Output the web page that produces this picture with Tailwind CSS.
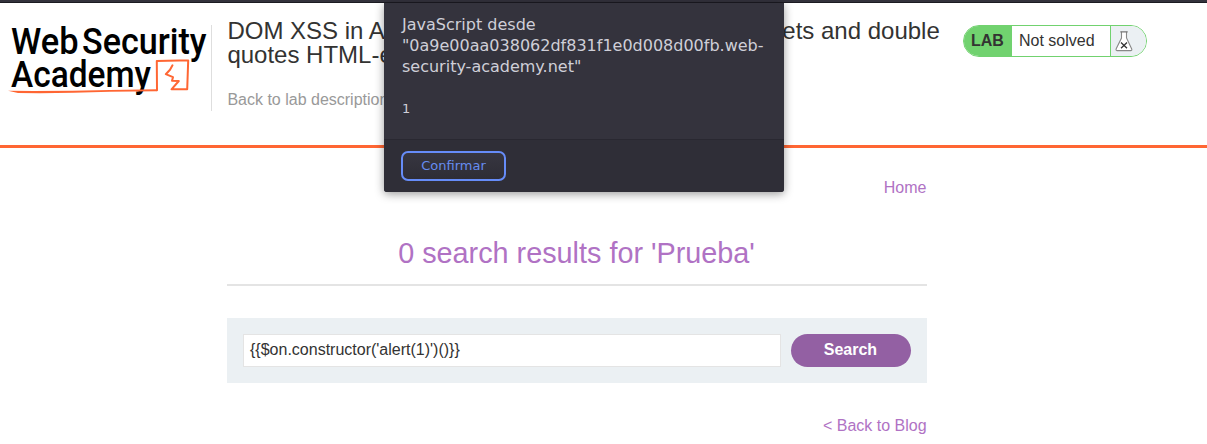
<!DOCTYPE html>
<html lang="en">
<head>
<meta charset="utf-8">
<title>Web Security Academy Lab</title>
<script src="https://cdn.jsdelivr.net/npm/@tailwindcss/browser@4"></script>
</head>
<body class="w-[1207px] h-[444px] overflow-hidden bg-white font-['Liberation_Sans',Arial,sans-serif] text-base text-[#333332]">
<div class="h-[3px] bg-[#33323c] border-b border-[#1c1b22]"></div>
<header class="flex h-[145px] border-b-3 border-[#ff6633]">
  <div class="w-[212px] h-[86px] mt-[22px] border-r border-[#dedede] shrink-0">
    <svg class="block overflow-visible" width="211" height="86" viewBox="0 25 211 86">
      <g font-family="Roboto, sans-serif" font-weight="500" font-size="37" fill="#000">
        <text x="11" y="53.8" textLength="67.5" lengthAdjust="spacingAndGlyphs">Web</text>
        <text x="82" y="53.8" textLength="124.5" lengthAdjust="spacingAndGlyphs">Security</text>
        <text x="11" y="86.6" textLength="140" lengthAdjust="spacingAndGlyphs">Academy</text>
      </g>
      <path d="M8 90.8Q60 91.2 110 90L157 89.2V91.2L110 91.8Q60 93.6 18 93Z" fill="#ff6633"/>
      <g fill="none" stroke="#ff6633" stroke-linejoin="round" stroke-linecap="round">
        <path d="M157 90.2L156.8 61Q172 60.2 188.2 60.5L187.2 89.3L171.5 89.3L178.8 81L172 80.8L173 77.2L165.8 74.2L170 69.8L172.5 65.3" stroke-width="2"/>
      </g>
    </svg>
  </div>
  <div class="ml-[15.4px] w-[735.6px] pt-4 shrink-0">
    <h2 class="w-[720px] text-2xl leading-6">DOM XSS in AngularJS expression with angle brackets and double quotes HTML-encoded</h2>
    <a class="block mt-[23px] leading-5 text-[#999]">Back to lab description »</a>
  </div>
  <div class="mt-[22px] flex h-8 w-[184px] shrink-0 overflow-hidden rounded-2xl border border-[#71d26f] leading-[30px]">
    <span class="w-12 bg-[#71d26f] pl-[7px] font-bold">LAB</span>
    <span class="w-[98px] pl-[7px]">Not solved</span>
    <span class="flex-1 border-l border-[#71d26f] bg-[#ebf0f3]">
      <svg class="block mt-[5px] ml-[4px]" width="18" height="21" viewBox="0 0 18 21" fill="none">
        <path d="M6.5 .8V7L1.2 17.8Q.6 19.6 2 19.6H16Q17.3 19.6 16.6 17.8L11.5 7V.8" fill="#fff" stroke="#888" stroke-width="1.1"/>
        <path d="M5.3 .8H12.7" stroke="#777" stroke-width="1.2"/>
        <path d="M6 11.5L12 17.2M12 11.5L6 17.2" stroke="#333" stroke-width="1.3"/>
      </svg>
    </span>
  </div>
</header>
<main class="ml-[227px] w-[700px]">
  <nav class="mt-[30px] pr-[0.6px] text-right leading-5 text-[#b072c4]">Home</nav>
  <h1 class="mt-10 h-[48px] border-b-2 border-[#e4e4e4] pr-px text-center text-[28.8px] leading-[30px] text-[#b072c4]">0 search results for 'Prueba'</h1>
  <form class="mt-8 flex h-[65px] gap-2.5 bg-[#ebf0f3] p-4">
    <div class="h-[33px] w-[538px] border border-[#e4e4e4] bg-white pl-1.5 leading-[30px]">{{$on.constructor('alert(1)')()}}</div>
    <button type="button" class="h-[33px] w-[120px] rounded-full bg-[#9360a3] pr-[1.2px] pb-px font-bold text-white">Search</button>
  </form>
  <a class="mt-[33px] block pr-[0.4px] text-right leading-5 text-[#b072c4]">&lt; Back to Blog</a>
</main>
<div class="absolute left-[384px] top-[3px] h-[189px] w-[400px] rounded-b-[3px] bg-[#34333d] font-['DejaVu_Sans',sans-serif] text-[#cfcfd8] shadow-[0_2px_10px_rgba(0,0,0,0.4)]">
  <div class="h-[137px] border-b border-[#292831] px-[18px] pt-[11px]">
    <p class="leading-[21px]">JavaScript desde<br>"0a9e00aa038062df831f1e0d008d00fb.web-<br>security-academy.net"</p>
    <p class="mt-[21px] text-[13px] leading-[21px]">1</p>
  </div>
  <div class="h-[52px] rounded-b-[3px] bg-[#2f2e37] pl-[17px] pt-[11px]">
    <button type="button" class="h-[30px] w-[105px] rounded-[7px] border-2 border-[#668cf8] bg-linear-to-b from-[#373640] to-[#2e2d36] text-[13px] text-[#668cf0]">Confirmar</button>
  </div>
</div>
</body>
</html>
